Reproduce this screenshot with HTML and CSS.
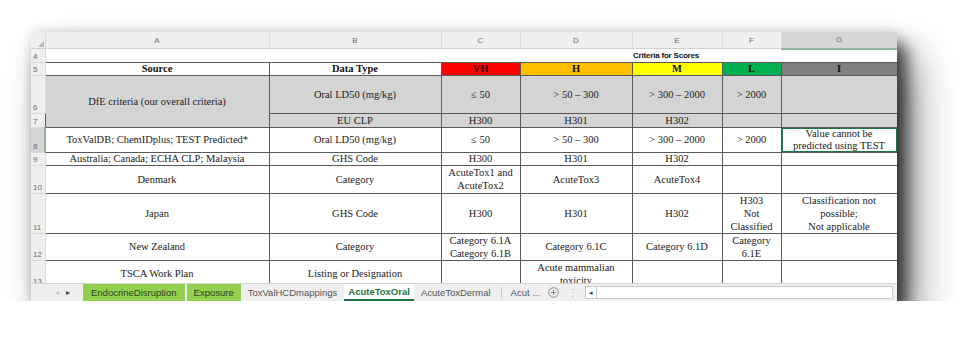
FILE: index.html
```html
<!DOCTYPE html>
<html lang="en">
<head>
	<meta charset="UTF-8">
	<title>AcuteToxOral</title>
	<link rel="stylesheet" href="styles.css">
</head>
<body>
	<div class="sheet">
		<div class="grid">
			<table>
				<colgroup>
					<col class="w-rh">
					<col class="w-a">
					<col class="w-b">
					<col class="w-c">
					<col class="w-d">
					<col class="w-e">
					<col class="w-f">
					<col class="w-g">
				</colgroup>
				<tr class="heads">
					<th class="corner"><svg width="6" height="6" viewBox="0 0 6 6"><polygon points="6,0 6,6 0,6" fill="#b8b8b8"/></svg></th>
					<th>A</th>
					<th>B</th>
					<th>C</th>
					<th>D</th>
					<th>E</th>
					<th>F</th>
					<th class="sel">G</th>
				</tr>
				<tr class="r4 thin">
					<th>4</th>
					<td></td><td></td><td></td><td></td>
					<td class="note">Criteria for Scores</td>
					<td></td><td></td>
				</tr>
				<tr class="r5 thin bold">
					<th>5</th>
					<td>Source</td>
					<td>Data Type</td>
					<td class="vh">VH</td>
					<td class="h">H</td>
					<td class="m">M</td>
					<td class="l">L</td>
					<td class="i">I</td>
				</tr>
				<tr class="r6 grey">
					<th>6</th>
					<td rowspan="2">DfE criteria (our overall criteria)</td>
					<td>Oral LD50 (mg/kg)</td>
					<td>&le; 50</td>
					<td>&gt; 50 &ndash; 300</td>
					<td>&gt; 300 &ndash; 2000</td>
					<td>&gt; 2000</td>
					<td></td>
				</tr>
				<tr class="r7 thin grey">
					<th>7</th>
					<td>EU CLP</td>
					<td>H300</td>
					<td>H301</td>
					<td>H302</td>
					<td></td>
					<td></td>
				</tr>
				<tr class="r8">
					<th class="sel">8</th>
					<td>ToxValDB; ChemIDplus; TEST Predicted*</td>
					<td>Oral LD50 (mg/kg)</td>
					<td>&le; 50</td>
					<td>&gt; 50 &ndash; 300</td>
					<td>&gt; 300 &ndash; 2000</td>
					<td>&gt; 2000</td>
					<td class="active">Value cannot be<br>predicted using TEST</td>
				</tr>
				<tr class="r9 thin">
					<th>9</th>
					<td>Australia; Canada; ECHA CLP; Malaysia</td>
					<td>GHS Code</td>
					<td>H300</td>
					<td>H301</td>
					<td>H302</td>
					<td></td>
					<td></td>
				</tr>
				<tr class="r10">
					<th>10</th>
					<td>Denmark</td>
					<td>Category</td>
					<td>AcuteTox1 and<br>AcuteTox2</td>
					<td>AcuteTox3</td>
					<td>AcuteTox4</td>
					<td></td>
					<td></td>
				</tr>
				<tr class="r11">
					<th>11</th>
					<td>Japan</td>
					<td>GHS Code</td>
					<td>H300</td>
					<td>H301</td>
					<td>H302</td>
					<td>H303<br>Not<br>Classified</td>
					<td>Classification not<br>possible;<br>Not applicable</td>
				</tr>
				<tr class="r12">
					<th>12</th>
					<td>New Zealand</td>
					<td>Category</td>
					<td>Category 6.1A<br>Category 6.1B</td>
					<td>Category 6.1C</td>
					<td>Category 6.1D</td>
					<td>Category<br>6.1E</td>
					<td></td>
				</tr>
				<tr class="r13">
					<th>13</th>
					<td>TSCA Work Plan</td>
					<td>Listing or Designation</td>
					<td></td>
					<td>Acute mammalian<br>toxicity</td>
					<td></td>
					<td></td>
					<td></td>
				</tr>
			</table>
		</div>
		<div class="tabbar">
			<span class="nav dim">&#9666;</span>
			<span class="nav">&#9656;</span>
			<span class="tab green wide">EndocrineDisruption</span>
			<span class="tab green">Exposure</span>
			<span class="tab">ToxValHCDmappings</span>
			<span class="tab active">AcuteToxOral</span>
			<span class="tab">AcuteToxDermal</span>
			<span class="sep"></span>
			<span class="tab short">Acut ...</span>
			<span class="add"><svg width="11" height="11" viewBox="0 0 11 11"><circle cx="5.5" cy="5.5" r="4.8" fill="none" stroke="#8a8a8a" stroke-width="1"/><path d="M5.5 3v5M3 5.5h5" stroke="#8a8a8a" stroke-width="1"/></svg></span>
			<span class="dots">&#8942;</span>
			<div class="hscroll"><span class="arrow">&#9666;</span></div>
		</div>
	</div>
</body>
</html>
```

FILE: styles.css
```css
*{margin:0;padding:0}
body{
	background:#fff;
	padding:32px 0 0 31px;
}
.sheet{
	width: 866px;
	background:#fff;
	box-shadow: 9px 12px 16px rgba(0,0,0,0.7), 18px 26px 40px rgba(0,0,0,0.45), 0 -2px 10px rgba(0,0,0,0.08);
}
.grid{
	height: 251px;
	overflow:hidden;
}
table{
	border-collapse:collapse;
	table-layout:fixed;
	width: 866px;
	font-family:"Liberation Serif", "Times New Roman", serif;
	font-size: 10.5px;
	line-height: 13px;
	color:#222;
}
.w-rh{width:14px}
.w-a{width:224px}
.w-b{width:172px}
.w-c{width:79px}
.w-d{width:112px}
.w-e{width:90px}
.w-f{width:59px}
.w-g{width:116px}

td{
	padding:0 1px;
	text-align:center;
	vertical-align:middle;
	border:1px solid #5a5a5a;
	overflow:hidden;
}
th{
	font-family:"Liberation Sans", Arial, sans-serif;
	font-weight:normal;
	color:#6a6a6a;
	background:#efefef;
	border:1px solid #dadada;
}

/* row numbers */
tr th{
	font-size:8px;
	line-height:9px;
	text-align:left;
	vertical-align:bottom;
	padding:0 0 1px 2px;
	border-left:none;
}
tr th.sel{
	background:#d6d6d6;
	border-right:2px solid #8fb7a0;
}

/* column letters */
tr.heads th{
	height:15px;
	font-size:8px;
	text-align:center;
	vertical-align:middle;
	padding:0;
	border-top:none;
	border-bottom:1px solid #d0d0d0;
}
tr.heads th.sel{
	background:#d6d6d6;
	border-right:1px solid #dadada;
	border-bottom:2px solid #8fb7a0;
}
tr.heads th.corner{
	text-align:right;
	vertical-align:bottom;
	padding:0 1px 1px 0;
}
.corner svg{display:block;margin-left:auto}

.thin td{line-height:11px}
.r4 td{
	height:12px;
	border:none;
	border-bottom:1px solid #5a5a5a;
}
.r4 td.note{
	text-align:left;
	white-space:nowrap;
	overflow:visible;
	font-family:"Liberation Sans", Arial, sans-serif;
	font-size:8px;
	font-weight:bold;
	letter-spacing:-0.2px;
	color:#111;
	padding-left:1px;
}
.r5 td{height:12px}
.r6 td{height:37px}
.r7 td{height:13px}
.r8 td{height:24px;line-height:12px}
.r9 td{height:12px}
.r10 td{height:27px}
.r11 td{height:39px}
.r12 td{height:25px}
.r13 td{height:25px}

.bold td{font-weight:bold;color:#111}
.vh{background:#ff0000;color:#3a0000 !important}
.h{background:#ffc000}
.m{background:#ffff00}
.l{background:#00b050}
.i{background:#7f7f7f}
.grey td{background:#d4d4d4}

td.active{
	position:relative;
	box-shadow:inset 0 0 0 1px #217346;
}
td.active::after{
	content:"";
	position:absolute;
	right:-2px;
	bottom:-2px;
	width:3px;
	height:3px;
	background:#217346;
}

/* sheet tabs */
.tabbar{
	height:17px;
	display:flex;
	align-items:stretch;
	background:#efefef;
	border-top:1px solid #d4d4d4;
	font-family:"Liberation Sans", Arial, sans-serif;
	font-size:9.5px;
	color:#555;
}
.nav{
	width:17px;
	display:flex;
	align-items:center;
	justify-content:center;
	font-size:8px;
	color:#444;
}
.nav.dim{
	width:28px;
	justify-content:flex-end;
	padding-right:0;
	color:#c4c4c4;
}
.nav + .nav{margin-right:7px}
.tab{
	display:flex;
	align-items:center;
	padding:0 5px;
	margin-right:2px;
	white-space:nowrap;
}
.tab.green{
	background:#92d050;
	color:#2f3f22;
	padding:0 7px;
}
.tab.green.wide{padding:0 8px}
.tab.active{
	background:#fff;
	color:#217346;
	font-weight:bold;
	border-bottom:2px solid #217346;
	padding:0 4px;
}
.tab.short{padding:0 2px}
.sep{
	width:1px;
	margin:3px 7px 3px 3px;
	background:#c8c8c8;
}
.add{
	display:flex;
	align-items:center;
	padding:0 6px 0 4px;
}
.dots{
	display:flex;
	align-items:center;
	color:#b0b0b0;
	padding:0 5px 0 3px;
}
.hscroll{
	flex:1;
	margin:2px 4px 2px 2px;
	background:#fff;
	border:1px solid #c8c8c8;
	display:flex;
}
.hscroll .arrow{
	width:10px;
	border-right:1px solid #c8c8c8;
	font-size:7px;
	color:#333;
	display:flex;
	align-items:center;
	justify-content:center;
}
```
